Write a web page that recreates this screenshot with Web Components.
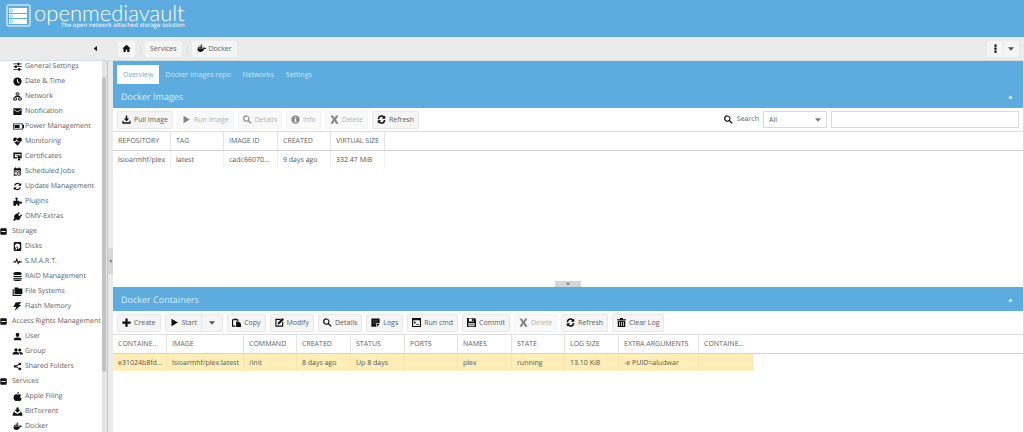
<!DOCTYPE html>
<html lang="en">
<head>
<meta charset="utf-8">
<meta name="viewport" content="width=device-width, initial-scale=1">
<title>openmediavault - Docker</title>
<style>
  :root { --blue: #5dacdf; --bar: #ebebeb; --line: #dedede; --text: #606060; }
  html, body { margin: 0; height: 100%; }
  body { font: 7px/10px "Open Sans", "Noto Sans", sans-serif; color: var(--text); background: #fff; text-rendering: geometricPrecision; }
</style>
</head>
<body>
<omv-app></omv-app>
<script>
const RESET = `*{box-sizing:border-box}
  button,input,select{font:inherit;color:inherit;margin:0;border:0;background:none;border-radius:0;padding:0}
  a{color:inherit;text-decoration:none} ul{list-style:none;margin:0;padding:0}`;

const ICONS = {
  home: '<path d="M10 21v-6h4v6h6v-9h3L12 2 1 12h3v9z"/>',
  docker: '<path d="M1 12h16c1-1 1-3 0-5 2 1 2 2 3 3 1 0 3 0 4 1-1 2-3 2-5 2-2 6-6 8-10 8-5 0-8-3-8-9zM3 8h3v3H3zM7 8h3v3H7zM11 8h3v3h-3zM7 4h3v3H7zM11 4h3v3h-3zM11 1h3v2h-3z"/>',
  dots: '<path d="M9 1h6v6H9zM9 9h6v6H9zM9 17h6v6H9z"/>',
  down: '<path d="M3 7h18l-9 10z"/>', up: '<path d="M2 18h20L12 6z"/>', left: '<path d="M17 3v18L6 12z"/>',
  sliders: '<path d="M1 4h11V2h5v2h6v2h-6v3h-5V6H1zM1 11h4V9h5v2h13v2H10v3H5v-3H1zM1 19h13v-3h5v3h4v2h-4v2h-5v-2H1z"/>',
  clock: '<path d="M12 1a11 11 0 1 0 0 22 11 11 0 0 0 0-22zm-1.500 5h2.500v6l5 3-1.200 2-6.300-4z"/>',
  network: '<path fill="none" stroke="currentColor" stroke-width="2.500" d="M8.500 2.500h7v6h-7zM2 15.500h7v6H2zM15 15.500h7v6h-7zM12 9v4M5.500 15v-3h13v3"/>',
  mail: '<path d="M1 3h22v18H1zm2 3v2l9 6 9-6V6l-9 6z" fill-rule="evenodd"/>',
  battery: '<path fill-rule="evenodd" d="M0 4h27v3h3v10h-3v3H0zm2 2v12h23V6zM4 8h14v8H4z"/>',
  heart: '<path d="M12 23 3 13h5l2-4 3 6 2-3h6zM1 11C-1 5 2 1 6 1c3 0 5 2 6 4 1-2 3-4 6-4 4 0 7 4 5 10h-9l-1 1-3-7-4 6z"/>',
  cert: '<path fill-rule="evenodd" d="M1 1h22v16h-3V5H5v9h6v3H1zM7 7h10v2H7zM16 9a4 4 0 1 1 0 8 4 4 0 0 1 0-8zM13 17l3 1 3-1v6l-3-2-3 2z"/>',
  calendar: '<path fill-rule="evenodd" d="M2 3h3V1h3v2h7V1h3v2h3v8h-3V9H4v11h6v3H2zM5 11h5v3H5zM16 11a6 6 0 1 1 0 12 6 6 0 0 1 0-12zm0 2a4 4 0 1 0 0 8 4 4 0 0 0 0-8zM15 14h2v3l2 1-1 2-3-2z"/>',
  sync: '<path d="M3 10C4 5 8 2 12 2c3 0 5 1 7 3l3-3v8h-8l3-3C13 3.500 8 5 6 10zM21 14c-1 5-5 8-9 8-3 0-5-1-7-3l-3 3v-8h8l-3 3c4 3.500 9 2 11-3z"/>',
  plugin: '<path d="M1 10h7V7C5 5 6 1 9.500 1S14 5 11 7v3h6v3h2c1-2 5-1 5 2s-4 4-5 2h-2v6h-5v-4H8v4H1z"/>',
  plug: '<path d="m0 21 4-4C2 12 3 8 7 6l3-2 10 10-1 3c-2 4-7 5-11 3l-4 4zM11 5l4-5 3 3-4 4zM17 11l5-5 2 3-4 4z"/>',
  minus: '<path fill-rule="evenodd" d="M4 1h16q3 0 3 3v16q0 3-3 3H4q-3 0-3-3V4q0-3 3-3zm1 9v4h14v-4z"/>',
  disk: '<path fill-rule="evenodd" d="M5 0h14q3 0 3 3v18q0 3-3 3H5q-3 0-3-3V3q0-3 3-3zm7 4a7 7 0 0 0-5 12l4-5 3 2-2 5a7 7 0 0 0 0-14zM7 18l-1 2 3 1 3-7-1-1z"/>',
  pulse: '<path fill="none" stroke="currentColor" stroke-width="3" d="M1 13h6l3-7 4 11 3-5 2 1h4"/>',
  stack: '<path d="M1 3c0-4 22-4 22 0v3c0 3-22 3-22 0zM1 9c4 2 18 2 22 0v3c0 3-22 3-22 0zM1 15c4 2 18 2 22 0v3c0 3-22 3-22 0zM1 20c4 2 18 2 22 0v1c0 4-22 4-22 0z"/>',
  folders: '<path d="M4 1h9l2 3h10v15H4zM-1 6h3v15h20v3H-1z"/>',
  flash: '<path d="m7 1 15-1-6 8h6L4 24l5-11H1z"/>',
  user: '<path d="M12 2a5 5.500 0 1 1 0 11 5 5.500 0 0 1 0-11zM2 22v-3c0-6 20-6 20 0v3z"/>',
  group: '<circle cx="8" cy="8" r="4.500"/><circle cx="18" cy="8" r="4"/><path d="M-1 20v-3c0-5 17-5 17 0v3zM18 20v-3c0-2-1-3-2-4 4 0 10 1 10 4v3z"/>',
  share: '<path d="M18 2a3.500 3.500 0 1 1-2 6l-7 4 7 4a3.500 3.500 0 1 1-1 2l-7-4a3.500 3.500 0 1 1 0-5l7-4a3.500 3.500 0 0 1 3-3z"/>',
  apple: '<path d="M16 0c0 3-2 5-5 5 0-3 2-5 5-5zM22 8c-4 3-4 7 1 9-1 4-3 7-6 7-2 0-3-1-5-1s-3 1-5 1C2 22-1 13 4 8c2-3 5-2 8-1 4-1 7-2 10 1z"/>',
  torrent: '<path d="M9 1h6v6h5l-8 8-8-8h5zM3 11l3 5h2l4 3 4-3h2l3-5 4 8v4H-1v-4z"/>',
  download: '<path d="M10 1h4v8h5l-7 8-7-8h5zM1 15h3v4h16v-4h3v8H1z"/>',
  play: '<path d="M4 2v20l17-10z"/>',
  search: '<path fill-rule="evenodd" d="M9 1a8.500 8.500 0 0 1 7 13l7 7-2.500 2.500-7-7A8.500 8.500 0 1 1 9 1zm0 3a5.500 5.500 0 1 0 0 11A5.500 5.500 0 0 0 9 4z"/>',
  info: '<path fill-rule="evenodd" d="M12 1a11 11 0 1 0 0 22 11 11 0 0 0 0-22zm-2 4h4v3h-4zM9 10h5v7h2v2H8v-2h2v-5H9z"/>',
  cross: '<path d="M1 1h7l4 7 4-7h7l-7 11 7 11h-7l-4-7-4 7H1l7-11z"/>',
  refresh: '<path d="M2 11V9c2-10 13-10 17-5l3-3v9h-9l3-3C12 3 7 5 6 11zM22 13v2c-2 10-13 10-17 5l-3 3v-9h9l-3 3c4 4 9 2 10-4z"/>',
  plus: '<path d="M9 1h6v8h8v6h-8v8H9v-8H1V9h8z"/>',
  paste: '<path fill-rule="evenodd" d="M0 3h6V1h6v2h5v5h-3V6H3v14h6v3H0zM11 9h7l6 6v9H11z"/>',
  edit: '<path d="M1 2h16l-3 3H4v15h15v-9l3-3v15H1zM8 12 20 0l4 4-12 12-5 1z"/>',
  note: '<path d="M1 1h22v13h-9v9H1zM16 16h7l-7 7z"/><path stroke="#888" d="M5 7h14M5 11h14M5 15h7"/>',
  terminal: '<path fill-rule="evenodd" d="M0 0h24v24H0zm3 6v15h18V6zM5 8l6 4-6 4v-3l2-1-2-1zM11 16h7v2h-7z"/>',
  save: '<path fill-rule="evenodd" d="M0 0h20l4 4v20H0zm5 1v8h13V1zM13 2h4v6h-4zM4 13v9h16v-9zM6 15h12v2H6zM6 19h12v1H6z"/>',
  trash: '<path fill-rule="evenodd" d="M0 3h8V0h8v3h8v3H0zM2 7h20v17H2zm4 3v11h2V10zm5 0v11h2V10zm5 0v11h2V10z"/>'
};

class OmvIcon extends HTMLElement {
  connectedCallback() {
    const name = this.getAttribute('name');
    const width = name === 'battery' ? 30 : 24;
    this.attachShadow({ mode: 'open' }).innerHTML = `<style>
      :host{display:block;flex:none;width:9px;height:9px;color:#111}
      svg{display:block;width:100%;height:100%;fill:currentColor;overflow:visible}
    </style><svg viewBox="0 0 ${width} 24" aria-hidden="true">${ICONS[name]}</svg>`;
  }
}

class OmvLogo extends HTMLElement {
  constructor() {
    super();
    this.attachShadow({ mode: 'open' }).innerHTML = `<style>
      :host{display:flex;gap:3px;padding:4px 0 0 6px;height:37px;flex:none;box-sizing:border-box;background:var(--blue);color:#fff}
      svg{width:25px;height:24px;flex:none}
      .words{display:grid;justify-items:end;align-content:start}
      .name{font:300 22px/17px Lato,"Open Sans",sans-serif}
      .tag{font:6px/8px "Open Sans",sans-serif}
    </style>
    <svg viewBox="0 0 25 24" fill="none" stroke="#fff" aria-hidden="true"><rect x="1" y="1" width="23" height="21" rx="1"/>
      <g fill="#fff" stroke="none"><path d="M3 4h18v5H3zM3 10h18v4H3zM3 15h18v5H3z"/></g>
      <g stroke="#5dacdf" stroke-width=".7"><circle cx="5.500" cy="6.500" r="1.300"/><circle cx="5.500" cy="12" r="1.300"/><circle cx="5.500" cy="17.500" r="1.300"/></g></svg>
    <div class="words"><span class="name">openmediavault</span><span class="tag">The open network attached storage solution</span></div>`;
  }
}

class OmvButton extends HTMLElement {
  connectedCallback() {
    const icon = this.getAttribute('icon');
    const menu = this.hasAttribute('menu');
    const off = this.hasAttribute('disabled');
    this.attachShadow({ mode: 'open' }).innerHTML = `<style>${RESET}
      :host{display:flex;height:18px;background:#f5f5f5;border:1px solid #e8e8e8;border-radius:2px;box-sizing:border-box;flex:none}
      :host([disabled]){opacity:.5}
      :host([flat]){height:16px;border-color:#f5f5f5}
      button{display:flex;align-items:center;gap:3px;padding:0 4px;white-space:nowrap}
      :host([icononly]) button{padding:0 3px}
      .menu{padding:0 6px;border-left:1px solid #e8e8e8}
      :host([flat]) .menu{padding:0 3px}
      .menu omv-icon{width:8px;height:8px;color:#555}
    </style><button type="button" ${off ? 'disabled' : ''} ${this.title ? `aria-label="${this.title}"` : ''}>${icon ? `<omv-icon name="${icon}"></omv-icon>` : ''}<slot></slot></button>
    ${menu ? '<button type="button" class="menu" aria-label="More"><omv-icon name="down"></omv-icon></button>' : ''}`;
  }
}

class OmvBreadcrumb extends HTMLElement {
  constructor() {
    super();
    this.attachShadow({ mode: 'open' }).innerHTML = `<style>${RESET}
      :host{display:flex;align-items:center;height:24px;flex:none;background:var(--bar);border-bottom:1px solid #cfdde5;box-sizing:border-box;padding-right:5px}
      .collapse{width:118px;padding-left:92px;flex:none}
      .collapse omv-icon{width:7px;height:7px}
      nav{display:flex;align-items:center;gap:5px;flex:1}
      i{width:1px;height:8px;background:#dcdcdc;margin-right:-1px}
    </style>
    <button class="collapse" aria-label="Collapse navigation"><omv-icon name="left"></omv-icon></button>
    <nav aria-label="Breadcrumb"><omv-button flat icononly icon="home" title="Home"></omv-button><i></i>
    <omv-button flat>Services</omv-button><i></i><omv-button flat icon="docker">Docker</omv-button></nav>
    <omv-button flat icononly menu icon="dots" title="Options"></omv-button>`;
  }
}

const TREE = [
  [null, [['sliders', 'General Settings'], ['clock', 'Date & Time'], ['network', 'Network'], ['mail', 'Notification'], ['battery', 'Power Management'], ['heart', 'Monitoring'], ['cert', 'Certificates'], ['calendar', 'Scheduled Jobs'], ['sync', 'Update Management'], ['plugin', 'Plugins'], ['plug', 'OMV-Extras']]],
  ['Storage', [['disk', 'Disks'], ['pulse', 'S.M.A.R.T.'], ['stack', 'RAID Management'], ['folders', 'File Systems'], ['flash', 'Flash Memory']]],
  ['Access Rights Management', [['user', 'User'], ['group', 'Group'], ['share', 'Shared Folders']]],
  ['Services', [['apple', 'Apple Filing'], ['torrent', 'BitTorrent'], ['docker', 'Docker']]]
];

class OmvTree extends HTMLElement {
  constructor() {
    super();
    const leaf = ([icon, label]) => `<li><a href="#"><omv-icon name="${icon}"></omv-icon>${label.replace('&', '&amp;')}</a></li>`;
    this.attachShadow({ mode: 'open' }).innerHTML = `<style>${RESET}
      :host{display:grid;grid-template-columns:102px 5px;width:108px;flex:none;border-right:1px solid #a9cfe4;box-sizing:border-box;overflow:hidden;min-height:0}
      nav{overflow:hidden;min-height:0}
      nav>ul{margin-top:-2px}
      a{display:flex;align-items:center;height:15px;padding-left:13px;gap:3px;white-space:nowrap}
      a.group{padding-left:0;gap:5px}
      a.group omv-icon{width:7px;height:7px}
      omv-icon[name=battery]{width:11px;margin-right:-2px}
      .track{background:#e4e4e4;padding:16px 1px 0 0}
      .thumb{height:83%;background:#c2c2c2;border-radius:2px}
    </style><nav aria-label="Navigation"><ul>${TREE.map(([group, items]) =>
      group ? `<li><a class="group" href="#"><omv-icon name="minus"></omv-icon>${group}</a><ul>${items.map(leaf).join('')}</ul></li>` : items.map(leaf).join('')).join('')}</ul></nav>
    <div class="track"><div class="thumb"></div></div>`;
  }
}

class OmvTabs extends HTMLElement {
  constructor() {
    super();
    this.attachShadow({ mode: 'open' }).innerHTML = `<style>${RESET}
      :host{display:flex;background:var(--blue);padding:4px 4px 0;height:23px;flex:none;box-sizing:border-box;color:#cfe6f5}
      button{padding:1px 6px 0;height:19px}
      button[aria-selected=true]{background:#fff;color:var(--blue)}
    </style><button role="tab" aria-selected="true">Overview</button><button role="tab">Docker images repo</button><button role="tab">Networks</button><button role="tab">Settings</button>`;
    this.setAttribute('role', 'tablist');
  }
}

class OmvPanel extends HTMLElement {
  connectedCallback() {
    this.attachShadow({ mode: 'open' }).innerHTML = `<style>${RESET}
      :host{display:flex;flex-direction:column;min-height:0;overflow:hidden;background:#fff}
      header{display:flex;align-items:center;justify-content:space-between;height:24px;flex:none;padding:1px 9px 0 8px;background:var(--blue);color:#dceefa}
      h2{font:inherit;font-size:9px;line-height:12px;margin:0}
      header omv-icon{width:7px;height:6px;color:#e8f4fb}
      .tools{display:flex;align-items:center;gap:4px;height:24px;flex:none;padding:0 4px;border-bottom:1px solid var(--line)}
    </style><header><h2>${this.getAttribute('heading')}</h2><button aria-label="Collapse"><omv-icon name="up"></omv-icon></button></header>
    <div class="tools"><slot name="tools"></slot></div><slot></slot>`;
  }
}

class OmvSearch extends HTMLElement {
  constructor() {
    super();
    this.attachShadow({ mode: 'open' }).innerHTML = `<style>${RESET}
      :host{display:block;margin-left:auto}
      form{display:flex;align-items:center;gap:4px}
      .pick{display:grid;grid-template-columns:1fr 8px 5px;align-items:center;width:64px}
      select,input{height:17px;border:1px solid #d9d9d9;background:#fff;padding:1px 5px 0}
      select{appearance:none;grid-area:1/1/2/4}
      .pick omv-icon{grid-area:1/2;width:8px;height:8px;color:#777;pointer-events:none;z-index:1}
      input{width:188px}
    </style><form role="search"><omv-icon name="search"></omv-icon><label for="field">Search</label>
    <span class="pick"><select id="field"><option>All</option></select><omv-icon name="down"></omv-icon></span>
    <input type="text" aria-label="Search text"></form>`;
  }
}

class OmvGrid extends HTMLElement {
  connectedCallback() {
    const columns = this.getAttribute('columns').split('|').map(c => c.split(':'));
    const cells = this.getAttribute('row').split('|');
    this.attachShadow({ mode: 'open' }).innerHTML = `<style>${RESET}
      :host{display:block}
      table{width:100%;table-layout:fixed;border-collapse:separate;border-spacing:0}
      th,td{font-weight:400;text-align:left;height:19px;padding:2px 0 0 5px;white-space:nowrap;overflow:hidden;border-right:1px solid #e4e4e4}
      th{border-bottom:1px solid #d2d2d2}
      td{height:17px;border-color:#f0f0f0;color:#555}
      th:last-child,td:last-child{border-right:0;padding:0}
      :host([selected]) td:not(:last-child){background:#ffeeb8;border-color:#f7e5ad}
      :host([selected]) th:nth-last-child(2){border-right-color:transparent}
    </style><table><colgroup>${columns.map(c => `<col style="width:${c[1]}px">`).join('')}<col></colgroup>
    <thead><tr>${columns.map(c => `<th scope="col">${c[0]}</th>`).join('')}<th></th></tr></thead>
    <tbody><tr>${cells.map(c => `<td>${c}</td>`).join('')}<td></td></tr></tbody></table>`;
  }
}

class OmvApp extends HTMLElement {
  constructor() {
    super();
    this.attachShadow({ mode: 'open' }).innerHTML = `<style>${RESET}
      :host{display:flex;flex-direction:column;height:100vh;overflow:hidden}
      .body{display:flex;flex:1;min-height:0}
      .split{width:5px;flex:none;background:var(--bar);display:flex;align-items:center}
      .split button{width:5px;height:26px;background:#d6d6d6;margin-top:28px}
      .split omv-icon{width:5px;height:8px;color:#777}
      main{flex:1;min-width:0;display:flex;flex-direction:column;border-right:1px solid #d6dde2}
      .images{flex:197 1 0}
      .containers{flex:145 1 0}
      .resize{display:flex;justify-content:center;height:6px;flex:none}
      .resize button{width:26px;height:6px;background:#d6d6d6;display:grid;justify-content:center}
      .resize omv-icon{width:8px;height:6px;color:#777}
    </style>
    <omv-logo></omv-logo><omv-breadcrumb></omv-breadcrumb>
    <div class="body"><omv-tree></omv-tree>
      <div class="split"><button aria-label="Collapse navigation"><omv-icon name="left"></omv-icon></button></div>
      <main><omv-tabs></omv-tabs>
        <omv-panel class="images" heading="Docker Images">
          <omv-button slot="tools" icon="download">Pull Image</omv-button>
          <omv-button slot="tools" icon="play" disabled>Run Image</omv-button>
          <omv-button slot="tools" icon="search" disabled>Details</omv-button>
          <omv-button slot="tools" icon="info" disabled>Info</omv-button>
          <omv-button slot="tools" icon="cross" disabled>Delete</omv-button>
          <omv-button slot="tools" icon="refresh">Refresh</omv-button>
          <omv-search slot="tools"></omv-search>
          <omv-grid columns="REPOSITORY:58|TAG:53|IMAGE ID:54|CREATED:53|VIRTUAL SIZE:54" row="lsioarmhf/plex|latest|cadc66070...|9 days ago|332.47 MiB"></omv-grid>
        </omv-panel>
        <div class="resize"><button aria-label="Collapse images"><omv-icon name="down"></omv-icon></button></div>
        <omv-panel class="containers" heading="Docker Containers">
          <omv-button slot="tools" icon="plus">Create</omv-button>
          <omv-button slot="tools" icon="play" menu>Start</omv-button>
          <omv-button slot="tools" icon="paste">Copy</omv-button>
          <omv-button slot="tools" icon="edit">Modify</omv-button>
          <omv-button slot="tools" icon="search">Details</omv-button>
          <omv-button slot="tools" icon="note">Logs</omv-button>
          <omv-button slot="tools" icon="terminal">Run cmd</omv-button>
          <omv-button slot="tools" icon="save">Commit</omv-button>
          <omv-button slot="tools" icon="cross" disabled>Delete</omv-button>
          <omv-button slot="tools" icon="refresh">Refresh</omv-button>
          <omv-button slot="tools" icon="trash">Clear Log</omv-button>
          <omv-grid selected columns="CONTAINE...:54|IMAGE:77|COMMAND:53|CREATED:54|STATUS:54|PORTS:53|NAMES:54|STATE:53|LOG SIZE:54|EXTRA ARGUMENTS:80|CONTAINE...:54" row="e31024b8fd...|lsioarmhf/plex:latest|/init|8 days ago|Up 8 days||plex|running|13.10 KiB|-e PUID=aludwar|"></omv-grid>
        </omv-panel>
      </main></div>`;
  }
}

customElements.define('omv-icon', OmvIcon);
customElements.define('omv-logo', OmvLogo);
customElements.define('omv-button', OmvButton);
customElements.define('omv-breadcrumb', OmvBreadcrumb);
customElements.define('omv-tree', OmvTree);
customElements.define('omv-tabs', OmvTabs);
customElements.define('omv-panel', OmvPanel);
customElements.define('omv-search', OmvSearch);
customElements.define('omv-grid', OmvGrid);
customElements.define('omv-app', OmvApp);
</script>
</body>
</html>
